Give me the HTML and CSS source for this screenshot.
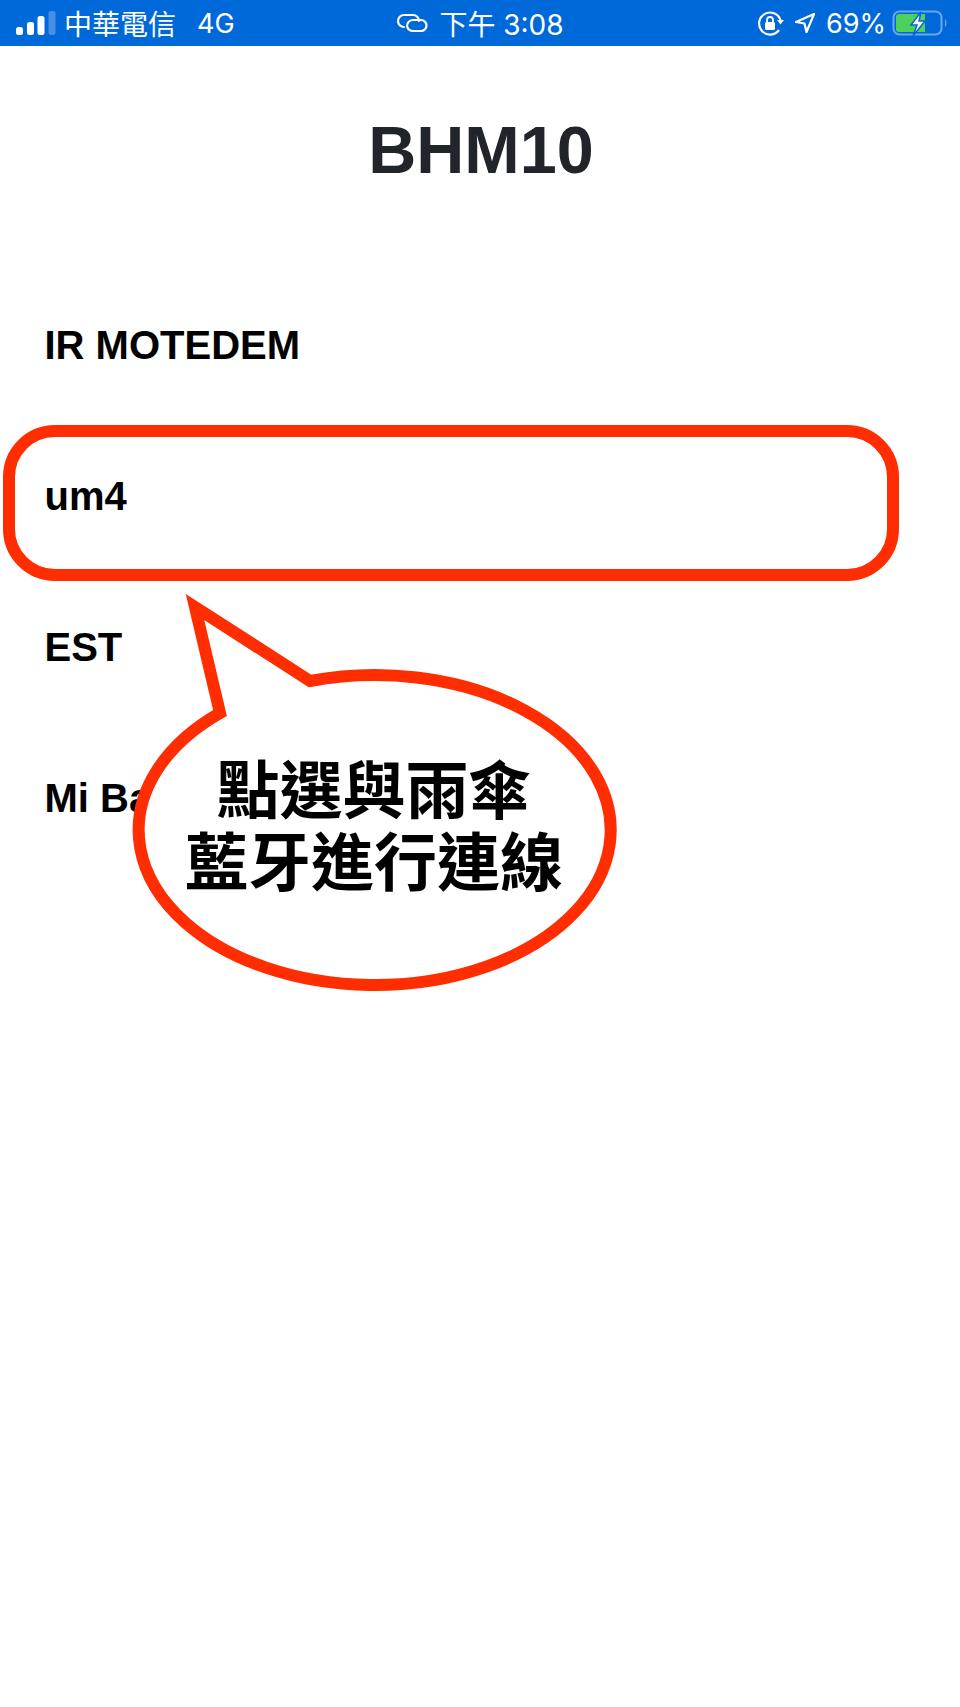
FILE: index.html
```html
<!DOCTYPE html>
<html lang="zh-Hant">
  <head>
    <meta charset="UTF-8" />
    <meta name="viewport" content="width=device-width, initial-scale=1.0" />
    <title>BHM10</title>
    <link rel="stylesheet" href="styles.css">
  </head>
  <body>
    <div class="page">
      <div class="status-bar">
        <div class="status-left">
          <svg class="signal" width="40" height="24" viewBox="0 0 40 24">
            <rect x="0" y="16" width="7" height="8" rx="2.5" fill="#fff" />
            <rect x="11" y="11" width="7" height="13" rx="2.5" fill="#fff" />
            <rect x="21.500" y="5" width="7" height="19" rx="2.5" fill="#fff" />
            <rect x="32.500" y="0" width="7" height="24" rx="2.5" fill="#4a8fe6" />
          </svg>
          <span class="carrier">中華電信</span>
          <span class="network">4G</span>
        </div>
        <div class="status-center">
          <svg class="link-icon" width="32" height="20" viewBox="0 0 32 20" fill="none" stroke="#fff" stroke-width="2.2" stroke-linecap="round">
            <path d="M8 14 a6 6 0 0 1 0 -12 h9 a6 6 0 0 1 6 6" />
            <path d="M11 13 a6 6 0 0 1 6 -6 h8 a5.500 5.500 0 0 1 0 11 h-8 a6 6 0 0 1 -6 -5" />
          </svg>
          <span class="clock">下午 3:08</span>
        </div>
        <div class="status-right">
          <svg class="lock-icon" width="27" height="27" viewBox="0 0 27 27" fill="none">
            <path d="M22 20 A11 11 0 1 1 23.500 10" stroke="#fff" stroke-width="2.2" />
            <path d="M20 10 h7 l-3.500 4.500 z" fill="#fff" />
            <rect x="8" y="12" width="10" height="8" rx="1.500" fill="#fff" />
            <path d="M10 12 v-2 a3 3 0 0 1 6 0 v2" stroke="#fff" stroke-width="1.800" />
          </svg>
          <svg class="arrow-icon" width="22" height="22" viewBox="0 0 22 22" fill="none">
            <path d="M20 2 L2 10 L10.500 11.500 L12.500 20 Z" stroke="#fff" stroke-width="2.200" stroke-linejoin="round" />
          </svg>
          <span class="battery-text">69%</span>
          <svg class="battery" width="56" height="26" viewBox="0 0 56 26">
            <rect x="1.500" y="1.500" width="48" height="23" rx="6" fill="none" stroke="#6aa5ee" stroke-width="2" />
            <path d="M4 7 a3 3 0 0 1 3 -3 H33 V22 H7 a3 3 0 0 1 -3 -3 Z" fill="#4cd25c" />
            <path d="M53 9 c2 1 2 7 0 8 Z" fill="#6aa5ee" />
            <path d="M29 2 L19 15 H25 L21 26 L33 11 H27 Z" fill="#fff" stroke="#0069d9" stroke-width="1.500" />
          </svg>
        </div>
      </div>

      <h1 class="title">BHM10</h1>

      <ul class="device-list">
        <li class="device">IR MOTEDEM</li>
        <li class="device">um4</li>
        <li class="device">EST</li>
        <li class="device">Mi Ba</li>
      </ul>

      <!-- annotations drawn on top of the screenshot -->
      <div class="highlight"></div>
      <svg class="bubble" width="960" height="1100" viewBox="0 0 960 1100">
        <path d="M310 681 L195 607 L220 713 A236 155 0 1 0 310 681 Z" fill="#fff" stroke="#ff2d00" stroke-width="12" stroke-miterlimit="10" />
      </svg>
      <div class="bubble-text">點選與雨傘<br />藍牙進行連線</div>
    </div>
  </body>
</html>
```

FILE: styles.css
```css
body {
  margin: 0;
  background-color: #ffffff;
  font-family: "Liberation Sans", "Noto Sans CJK TC", sans-serif;
}

.page {
  position: relative;
  height: 1707px;
  overflow: hidden;
}

.status-bar {
  display: grid;
  grid-template-columns: 1fr auto 1fr;
  align-items: center;
  height: 46px;
  background-color: #0069d9;
  color: #ffffff;
  font-family: "Inter", "Noto Sans CJK TC", sans-serif;
  font-size: 27px;
}

.status-left,
.status-center,
.status-right {
  display: flex;
  align-items: center;
}

.status-left {
  padding-left: 16px;
}

.signal {
  margin-right: 8px;
}

.carrier {
  font-size: 28px;
  margin-right: 21px;
}

.link-icon {
  margin-right: 11px;
}

.clock {
  font-size: 28px;
}

.status-right {
  justify-content: flex-end;
  padding-right: 12px;
}

.lock-icon {
  margin-right: 10px;
}

.arrow-icon {
  margin-right: 10px;
}

.battery-text {
  margin-right: 6px;
}

.title {
  margin: 0;
  padding: 66px 0 0 2px;
  height: 158px;
  line-height: 76px;
  text-align: center;
  font-size: 66.5px;
  font-weight: bold;
  color: #212529;
}

.device-list {
  list-style: none;
  margin: 0;
  padding: 0 44.5px;
}

.device {
  height: 151px;
  line-height: 151px;
  font-size: 40px;
  font-weight: bold;
  color: #000000;
}

.highlight {
  position: absolute;
  left: 3px;
  top: 425px;
  width: 872px;
  height: 132px;
  border: 12px solid #ff2d00;
  border-radius: 52px;
}

.bubble {
  position: absolute;
  left: 0;
  top: 0;
}

.bubble-text {
  position: absolute;
  left: 174px;
  top: 750px;
  width: 400px;
  text-align: center;
  white-space: nowrap;
  font-family: "Noto Sans CJK TC", sans-serif;
  font-size: 63px;
  font-weight: bold;
  line-height: 72px;
  color: #000000;
}
```
